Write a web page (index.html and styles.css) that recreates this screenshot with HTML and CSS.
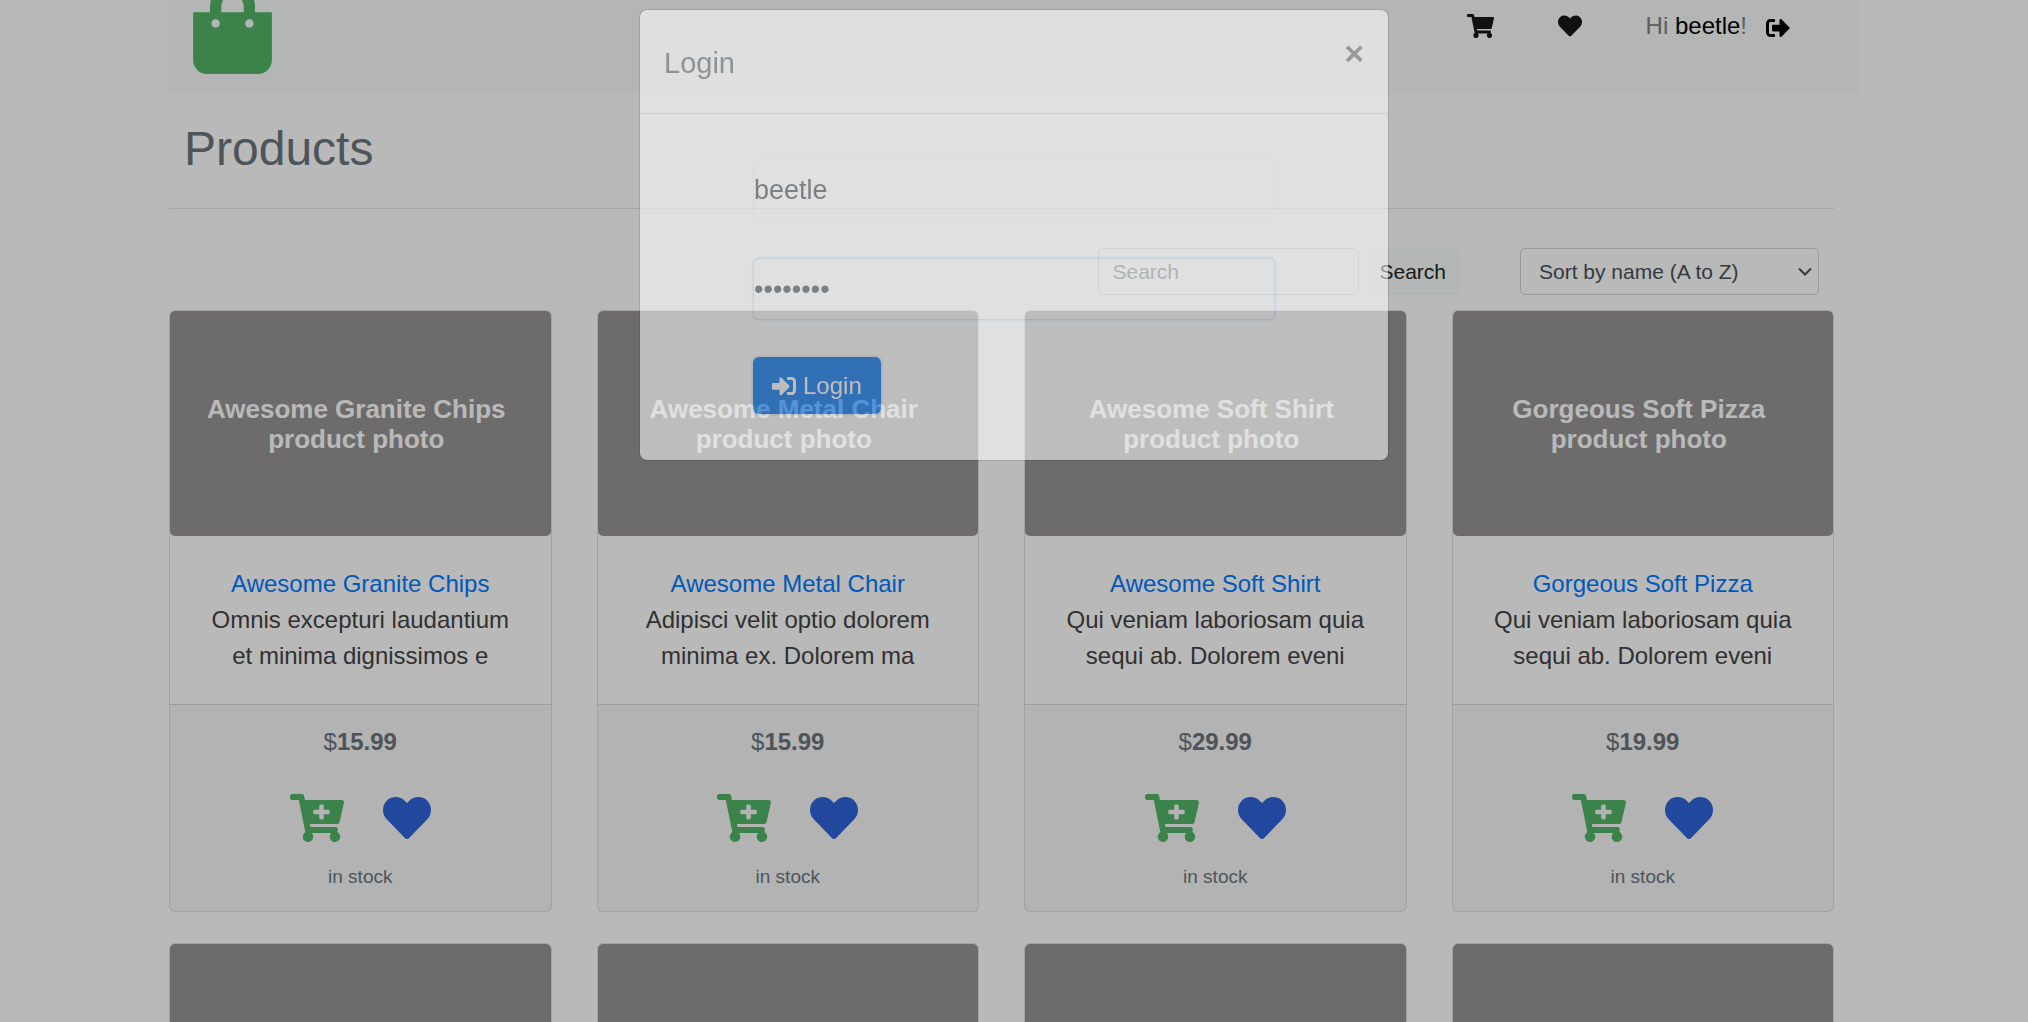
FILE: index.html
```html
<!DOCTYPE html>
<html lang="en">
<head>
<meta charset="utf-8">
<meta name="viewport" content="width=device-width, initial-scale=1">
<title>Products</title>
<link rel="stylesheet" href="styles.css">
</head>
<body>
<svg class="sprite" aria-hidden="true">
  <symbol id="bag" viewBox="0 0 448 512"><path d="M352 160v-32C352 57.42 294.579 0 224 0 153.42 0 96 57.42 96 128v32H0v272c0 44.183 35.817 80 80 80h288c44.183 0 80-35.817 80-80V160h-96zm-192-32c0-35.29 28.71-64 64-64s64 28.71 64 64v32H160v-32zm160 120c-13.255 0-24-10.745-24-24s10.745-24 24-24 24 10.745 24 24-10.745 24-24 24zm-192 0c-13.255 0-24-10.745-24-24s10.745-24 24-24 24 10.745 24 24-10.745 24-24 24z"/></symbol>
  <symbol id="cart" viewBox="0 0 576 512"><path d="M528.12 301.319l47.273-208C578.806 78.301 567.391 64 551.99 64H159.208l-9.166-44.81C147.758 8.021 137.93 0 126.529 0H24C10.745 0 0 10.745 0 24v16c0 13.255 10.745 24 24 24h69.883l70.248 343.435C147.325 417.1 136 435.222 136 456c0 30.928 25.072 56 56 56s56-25.072 56-56c0-15.674-6.447-29.835-16.824-40h209.647C430.447 426.165 424 440.326 424 456c0 30.928 25.072 56 56 56s56-25.072 56-56c0-22.172-12.888-41.332-31.579-50.405l5.517-24.276c3.413-15.018-8.002-29.319-23.403-29.319H218.117l-6.545-32h293.145c11.206 0 20.92-7.754 23.403-18.681z"/></symbol>
  <symbol id="cart-plus" viewBox="0 0 576 512"><path d="M504.717 320H211.572l6.545 32h268.418c15.401 0 26.816 14.301 23.403 29.319l-5.517 24.276C523.112 414.668 536 433.828 536 456c0 31.202-25.519 56.444-56.824 55.994-29.823-.429-54.35-24.631-55.155-54.447-.44-16.287 6.085-31.049 16.803-41.548H231.176C241.553 426.165 248 440.326 248 456c0 31.813-26.528 57.431-58.67 55.938-28.54-1.325-51.751-24.385-53.251-52.917-1.158-22.034 10.436-41.455 28.051-51.586L93.883 64H24C10.745 64 0 53.255 0 40V24C0 10.745 10.745 0 24 0h102.529c11.401 0 21.228 8.021 23.513 19.19L159.208 64H551.99c15.401 0 26.816 14.301 23.403 29.319l-47.273 208C525.637 312.246 515.923 320 504.717 320zM408 168h-48v-40c0-8.837-7.163-16-16-16h-16c-8.837 0-16 7.163-16 16v40h-48c-8.837 0-16 7.163-16 16v16c0 8.837 7.163 16 16 16h48v40c0 8.837 7.163 16 16 16h16c8.837 0 16-7.163 16-16v-40h48c8.837 0 16-7.163 16-16v-16c0-8.837-7.163-16-16-16z"/></symbol>
  <symbol id="heart" viewBox="0 0 512 512"><path d="M462.3 62.6C407.5 15.9 326 24.3 275.7 76.2L256 96.5l-19.7-20.3C186.1 24.3 104.5 15.9 49.7 62.6c-62.8 53.6-66.1 149.8-9.9 207.9l193.5 199.8c12.5 12.9 32.8 12.9 45.3 0l193.5-199.8c56.3-58.1 53-154.3-9.8-207.9z"/></symbol>
  <symbol id="sign-out" viewBox="0 0 512 512"><path d="M497 273L329 441c-15 15-41 4.5-41-17v-96H152c-13.3 0-24-10.7-24-24v-96c0-13.3 10.7-24 24-24h136V88c0-21.4 25.9-32 41-17l168 168c9.3 9.4 9.3 24.6 0 34zM192 436v-40c0-6.6-5.4-12-12-12H96c-17.7 0-32-14.3-32-32V160c0-17.7 14.3-32 32-32h84c6.6 0 12-5.4 12-12V76c0-6.6-5.4-12-12-12H96c-53 0-96 43-96 96v192c0 53 43 96 96 96h84c6.6 0 12-5.4 12-12z"/></symbol>
  <symbol id="sign-in" viewBox="0 0 512 512"><path d="M416 448h-84c-6.6 0-12-5.4-12-12v-40c0-6.6 5.4-12 12-12h84c17.7 0 32-14.3 32-32V160c0-17.7-14.3-32-32-32h-84c-6.6 0-12-5.4-12-12V76c0-6.6 5.4-12 12-12h84c53 0 96 43 96 96v192c0 53-43 96-96 96zm-47-201L201 79c-15-15-41-4.5-41 17v96H24c-13.3 0-24 10.7-24 24v96c0 13.3 10.7 24 24 24h136v96c0 21.5 26 32 41 17l168-168c9.3-9.4 9.3-24.6 0-34z"/></symbol>
  <symbol id="chevron" viewBox="0 0 14 10"><path d="M1 1.5l6 6 6-6" fill="none" stroke="currentColor" stroke-width="2"/></symbol>
</svg>

<div class="container">
  <header class="navbar">
    <a class="brand" href="#" aria-label="Home"><svg class="brand-icon"><use href="#bag"/></svg></a>
    <nav class="nav">
      <a class="nav-link" href="#" aria-label="Cart"><svg class="icon-cart"><use href="#cart"/></svg></a>
      <a class="nav-link" href="#" aria-label="Favorites"><svg class="icon"><use href="#heart"/></svg></a>
      <div class="user">
        <span class="greeting">Hi <a class="username" href="#">beetle</a>!</span>
        <a class="logout" href="#" aria-label="Log out"><svg class="icon"><use href="#sign-out"/></svg></a>
      </div>
    </nav>
  </header>

  <main class="content">
    <h2 class="page-title">Products</h2>
    <hr class="divider">
    <div class="toolbar">
      <form class="search">
        <input class="search-input" type="search" placeholder="Search" aria-label="Search">
        <button class="search-button" type="button">Search</button>
      </form>
      <div class="sort">
        <select class="sort-select" aria-label="Sort products">
          <option>Sort by name (A to Z)</option>
        </select>
        <svg class="sort-arrow"><use href="#chevron"/></svg>
      </div>
    </div>

    <div class="products">
      <article class="card">
        <div class="photo">Awesome Granite Chips<br>product photo</div>
        <div class="card-body">
          <a class="product-link" href="#">Awesome Granite Chips</a>
          <p class="description">Omnis excepturi laudantium et minima dignissimos e</p>
        </div>
        <div class="card-footer">
          <div class="price">$<b>15.99</b></div>
          <div class="actions">
            <button class="action add" type="button" aria-label="Add to cart"><svg class="icon-cart-large"><use href="#cart-plus"/></svg></button>
            <button class="action favorite" type="button" aria-label="Add to favorites"><svg class="icon-large"><use href="#heart"/></svg></button>
          </div>
          <div class="stock">in stock</div>
        </div>
      </article>
      <article class="card">
        <div class="photo">Awesome Metal Chair<br>product photo</div>
        <div class="card-body">
          <a class="product-link" href="#">Awesome Metal Chair</a>
          <p class="description">Adipisci velit optio dolorem minima ex. Dolorem ma</p>
        </div>
        <div class="card-footer">
          <div class="price">$<b>15.99</b></div>
          <div class="actions">
            <button class="action add" type="button" aria-label="Add to cart"><svg class="icon-cart-large"><use href="#cart-plus"/></svg></button>
            <button class="action favorite" type="button" aria-label="Add to favorites"><svg class="icon-large"><use href="#heart"/></svg></button>
          </div>
          <div class="stock">in stock</div>
        </div>
      </article>
      <article class="card">
        <div class="photo">Awesome Soft Shirt<br>product photo</div>
        <div class="card-body">
          <a class="product-link" href="#">Awesome Soft Shirt</a>
          <p class="description">Qui veniam laboriosam quia sequi ab. Dolorem eveni</p>
        </div>
        <div class="card-footer">
          <div class="price">$<b>29.99</b></div>
          <div class="actions">
            <button class="action add" type="button" aria-label="Add to cart"><svg class="icon-cart-large"><use href="#cart-plus"/></svg></button>
            <button class="action favorite" type="button" aria-label="Add to favorites"><svg class="icon-large"><use href="#heart"/></svg></button>
          </div>
          <div class="stock">in stock</div>
        </div>
      </article>
      <article class="card">
        <div class="photo">Gorgeous Soft Pizza<br>product photo</div>
        <div class="card-body">
          <a class="product-link" href="#">Gorgeous Soft Pizza</a>
          <p class="description">Qui veniam laboriosam quia sequi ab. Dolorem eveni</p>
        </div>
        <div class="card-footer">
          <div class="price">$<b>19.99</b></div>
          <div class="actions">
            <button class="action add" type="button" aria-label="Add to cart"><svg class="icon-cart-large"><use href="#cart-plus"/></svg></button>
            <button class="action favorite" type="button" aria-label="Add to favorites"><svg class="icon-large"><use href="#heart"/></svg></button>
          </div>
          <div class="stock">in stock</div>
        </div>
      </article>
      <article class="card"><div class="photo"></div></article>
      <article class="card"><div class="photo"></div></article>
      <article class="card"><div class="photo"></div></article>
      <article class="card"><div class="photo"></div></article>
    </div>
  </main>
</div>

<div class="backdrop"></div>
<div class="modal" role="dialog" aria-labelledby="login-title">
  <div class="modal-header">
    <h5 class="modal-title" id="login-title">Login</h5>
    <button class="close" type="button" aria-label="Close">×</button>
  </div>
  <form class="modal-body">
    <input class="field" type="text" value="beetle" aria-label="Username">
    <input class="field field-focus" type="password" value="password" aria-label="Password">
    <button class="login-button" type="button"><svg class="icon"><use href="#sign-in"/></svg>Login</button>
  </form>
</div>
</body>
</html>
```
FILE: styles.css
```css
* {
  box-sizing: border-box;
}

body {
  margin: 0;
  height: 100vh;
  overflow: hidden;
  background: #fff;
  color: #444;
  font: 24px/36px "Liberation Sans", Arial, sans-serif;
}

button,
input,
select {
  margin: 0;
  font: inherit;
}

a {
  color: inherit;
  text-decoration: none;
}

svg {
  display: block;
  fill: currentColor;
}

.sprite {
  position: absolute;
  width: 0;
  height: 0;
}

.icon { width: 24px; height: 24px; }
.icon-cart { width: 27px; height: 24px; }
.icon-large { width: 48px; height: 48px; }
.icon-cart-large { width: 54px; height: 48px; }

.container {
  max-width: 1690px;
  margin: 0 auto;
}

/* Header */
.navbar {
  display: flex;
  justify-content: space-between;
  padding: 0 69px 20px 24px;
  background: #f7fbf9;
}

.brand {
  margin-top: -16px;
  color: #52b468;
}

.brand-icon {
  width: 79px;
  height: 90px;
}

.nav {
  display: flex;
  align-items: flex-start;
  gap: 64px;
  padding-top: 8px;
}

.nav-link {
  padding-top: 6px;
  color: #181818;
}

.user {
  display: flex;
  gap: 19px;
  color: #808080;
}

.username,
.logout {
  color: #000;
}

.logout {
  padding-top: 8px;
}

/* Product list */
.content {
  padding: 26px 25px 0 0;
}

.page-title {
  margin: 0;
  padding-left: 15px;
  color: #6c757d;
  font-size: 48px;
  font-weight: 400;
  line-height: 58px;
}

.divider {
  height: 1px;
  margin: 30px 0 39px;
  border: 0;
  background: rgba(0, 0, 0, .1);
}

.toolbar {
  display: flex;
  justify-content: flex-end;
  gap: 60px;
  padding: 0 15px 15px;
  font-size: 21px;
}

.search {
  display: flex;
  gap: 6px;
}

.search-input,
.sort-select {
  height: 47px;
  border: 1px solid #ced4da;
  border-radius: 5px;
  background: #fff;
  color: #495057;
}

.search-input {
  width: 261px;
  padding: 0 13px;
}

.search-input::placeholder {
  color: #6c757d;
}

.search-button {
  padding: 0 14px;
  border: 0;
  border-radius: 5px;
  background: #f7fbf9;
  color: #212529;
}

.sort {
  display: grid;
  align-items: center;
}

.sort-select,
.sort-arrow {
  grid-area: 1 / 1;
}

.sort-select {
  width: 299px;
  padding: 0 18px;
  appearance: none;
}

.sort-arrow {
  justify-self: end;
  width: 14px;
  height: 10px;
  margin-right: 7px;
  color: #495057;
  pointer-events: none;
}

.products {
  display: grid;
  grid-template-columns: repeat(4, 1fr);
  gap: 31px 45px;
}

.card {
  border: 1px solid rgba(0, 0, 0, .125);
  border-radius: 6px;
  text-align: center;
}

.photo {
  display: flex;
  flex-direction: column;
  justify-content: center;
  height: 225px;
  padding-right: 8px;
  border-radius: 5px;
  background: #979495;
  color: #fff;
  font-size: 26px;
  font-weight: 700;
  line-height: 30px;
}

.card-body {
  padding: 30px;
}

.product-link {
  color: #007bff;
}

.description {
  margin: 0;
}

.card-footer {
  padding: 19px 18px 20px;
  border-top: 1px solid rgba(0, 0, 0, .125);
  background: rgba(0, 0, 0, .03);
  color: #6c757d;
}

.actions {
  display: flex;
  justify-content: center;
  gap: 39px;
  padding: 34px 0 20px;
}

.action {
  padding: 0;
  border: 0;
  background: none;
}

.add { color: #52b468; }
.favorite { color: #2e64d7; }

.stock {
  font-size: 19px;
  line-height: 29px;
}

/* Login dialog, part-way through its fade */
.backdrop {
  position: fixed;
  inset: 0;
  background: rgba(0, 0, 0, .275);
}

.modal {
  position: fixed;
  top: 9px;
  left: 0;
  right: 0;
  max-width: 750px;
  margin: 0 auto;
  border: 1px solid rgba(0, 0, 0, .2);
  border-radius: 8px;
  background: #fff;
  background-clip: padding-box;
  opacity: .55;
}

.modal-header {
  display: flex;
  justify-content: space-between;
  align-items: flex-start;
  padding: 24px 24px 27px;
  border-bottom: 1px solid #dee2e6;
}

.modal-title {
  margin: 7px 0 0;
  color: #6c757d;
  font-size: 29px;
  font-weight: 400;
  line-height: 45px;
}

.close {
  padding: 0;
  border: 0;
  background: none;
  color: #000;
  font-size: 34px;
  font-weight: 700;
  line-height: 38px;
  opacity: .5;
}

.modal-body {
  display: flex;
  flex-direction: column;
  align-items: flex-start;
  gap: 37px;
  padding: 45px 113px 46px;
}

.field {
  width: 100%;
  height: 62px;
  padding: 0;
  border: 1px solid #f4f6f7;
  border-radius: 6px;
  outline: 0;
  background: #fff;
  color: #495057;
  font-size: 27px;
}

.field-focus {
  border-color: #cce4fb;
  box-shadow: 0 0 2px 1px rgba(0, 123, 255, .12);
}

.login-button {
  display: flex;
  align-items: center;
  gap: 7px;
  height: 57px;
  padding: 0 19px;
  border: 0;
  border-radius: 6px;
  background: #0074f0;
  box-shadow: 0 0 0 2px rgba(0, 123, 255, .12);
  color: #fff;
}
```
